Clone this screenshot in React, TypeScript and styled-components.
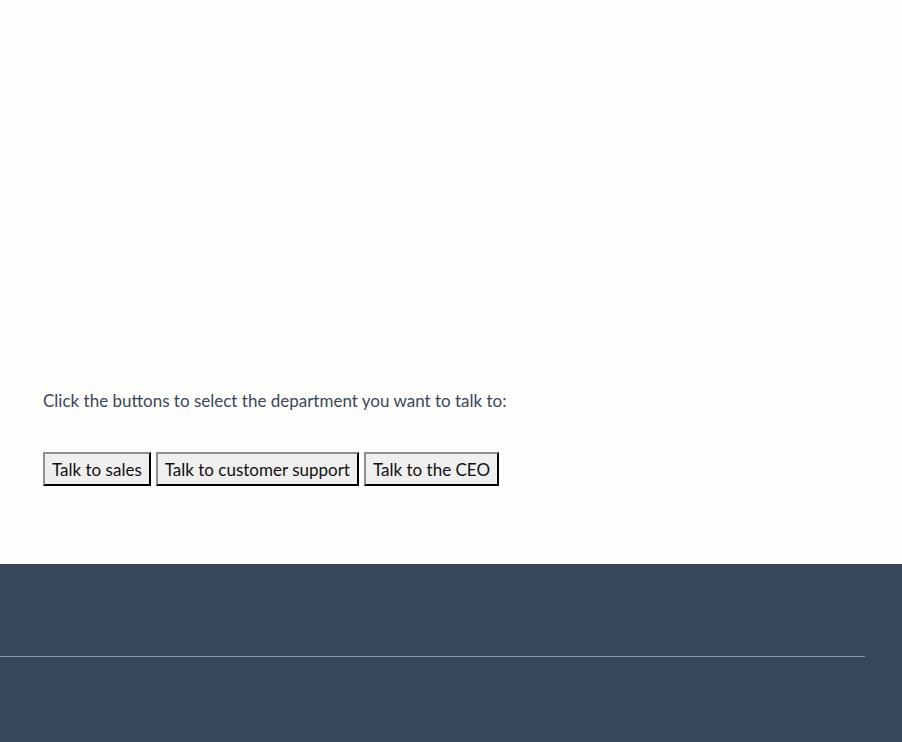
import styled, { createGlobalStyle } from 'styled-components'

const GlobalStyle = createGlobalStyle`
  html, body {
    margin: 0;
    padding: 0;
    background-color: #fdfdfc;
  }
  body {
    font-family: Lato, 'Open Sans', sans-serif;
  }
`

const Page = styled.div`
  min-height: 742px;
  display: flex;
  flex-direction: column;
  overflow: hidden;
`

const Main = styled.main`
  height: 564px;
  box-sizing: border-box;
  display: flex;
  flex-direction: column;
  justify-content: flex-end;
  padding: 0 43px 78px;
`

const Intro = styled.p`
  margin: 0 0 39px;
  font-size: 17px;
  line-height: 24px;
  color: #3b4759;
`

const ButtonRow = styled.div`
  display: flex;
  gap: 5px;
`

const DeptButton = styled.button`
  height: 34px;
  padding: 0 7px;
  font-family: Lato, 'Open Sans', sans-serif;
  font-size: 17px;
  color: #111;
  background-color: #efefef;
  border: 2px outset #767676;
  border-top-color: #8f8f8f;
  border-left-color: #8f8f8f;
  border-right-color: #2b2b2b;
  border-bottom-color: #2b2b2b;
  cursor: pointer;
`

const Footer = styled.footer`
  flex: 1;
  min-height: 178px;
  background-color: #374759;
  padding-top: 92px;
  box-sizing: border-box;
`

const Rule = styled.hr`
  margin: 0;
  width: 865px;
  border: 0;
  border-top: 1px solid #8797ab;
`

const departments = [
  'Talk to sales',
  'Talk to customer support',
  'Talk to the CEO',
]

function App() {
  return (
    <>
      <GlobalStyle />
      <Page>
        <Main>
          <Intro>
            Click the buttons to select the department you want to talk to:
          </Intro>
          <ButtonRow>
            {departments.map((dept) => (
              <DeptButton key={dept}>{dept}</DeptButton>
            ))}
          </ButtonRow>
        </Main>
        <Footer>
          <Rule />
        </Footer>
      </Page>
    </>
  )
}

export default App
